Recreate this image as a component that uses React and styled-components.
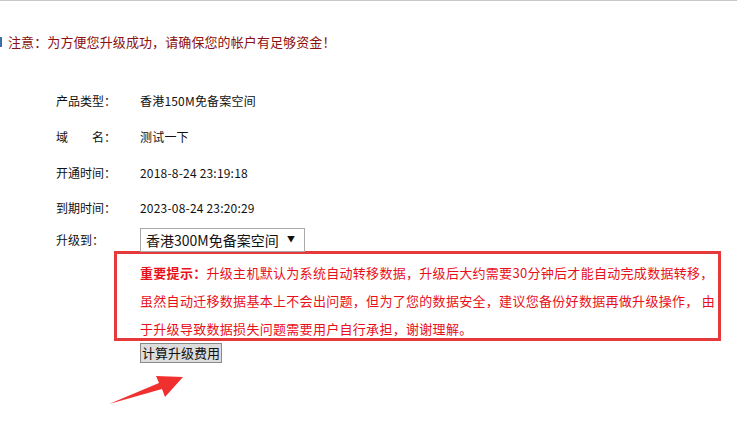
import styled, { createGlobalStyle } from 'styled-components';

const GlobalStyle = createGlobalStyle`
  html, body {
    margin: 0;
    padding: 0;
    background: #ffffff;
  }
  body {
    font-family: "Noto Sans CJK SC", "Liberation Sans", sans-serif;
    color: #111111;
  }
`;

const Page = styled.div`
  position: relative;
  width: 737px;
  height: 437px;
  border-top: 1px solid #c8c8c8;
  box-sizing: border-box;
  overflow: hidden;
`;

const Notice = styled.div`
  margin-top: 32px;
  padding-left: 8px;
  height: 18px;
  line-height: 18px;
  font-size: 13px;
  color: #8b1010;
  letter-spacing: 0.1px;
  position: relative;
  &::before {
    content: '';
    position: absolute;
    left: 0;
    top: 4px;
    width: 2px;
    height: 10px;
    background: #3a6ea5;
  }
`;

const Form = styled.div`
  margin-top: 31px;
  padding-left: 56px;
  display: flex;
  flex-direction: column;
`;

const Row = styled.div`
  display: flex;
  align-items: center;
  height: ${(p) => p.$h || 36}px;
  font-size: 12px;
`;

const Label = styled.div`
  width: 84px;
  flex-shrink: 0;
`;

const Value = styled.div`
  font-size: 12px;
  letter-spacing: 0.2px;
`;

const SelectWrap = styled.span`
  position: relative;
  display: inline-block;
  margin-top: 2px;
  &::after {
    content: '▼';
    position: absolute;
    right: 10px;
    top: 5px;
    font-size: 8px;
    color: #111;
    pointer-events: none;
  }
`;

const Select = styled.select`
  appearance: none;
  -webkit-appearance: none;
  width: 165px;
  height: 24px;
  padding: 0 0 0 5px;
  border: 1px solid #a9a9a9;
  border-radius: 0;
  background: #ffffff;
  font-family: "Noto Sans CJK SC", sans-serif;
  font-size: 14px;
  color: #111;
`;

const Warning = styled.div`
  margin: -2px 0 0 114px;
  width: 578px;
  border: 3px solid #e5393c;
  padding: 5px 0 0 23px;
  height: 79px;
  font-size: 13px;
  line-height: 28px;
  color: #e8101a;
  letter-spacing: 0.3px;
  strong {
    font-weight: bold;
  }
`;

const Button = styled.button`
  margin: 2px 0 0 140px;
  height: 20px;
  padding: 0 1px;
  border: 1px solid #8a8a8a;
  border-radius: 0;
  background: #dddddd;
  font-family: "Noto Sans CJK SC", sans-serif;
  font-size: 13px;
  line-height: 18px;
  color: #111;
  align-self: flex-start;
`;

const Column = styled.div`
  display: flex;
  flex-direction: column;
`;

const Arrow = styled.svg`
  position: absolute;
  left: 100px;
  top: 365px;
`;

export default function App() {
  return (
    <>
      <GlobalStyle />
      <Page>
        <Notice>注意：为方便您升级成功，请确保您的帐户有足够资金！</Notice>
        <Form>
          <Row $h={36}><Label>产品类型：</Label><Value>香港150M免备案空间</Value></Row>
          <Row $h={36}><Label>域　　名：</Label><Value>测试一下</Value></Row>
          <Row $h={36}><Label>开通时间：</Label><Value>2018-8-24 23:19:18</Value></Row>
          <Row $h={35}><Label>到期时间：</Label><Value>2023-08-24 23:20:29</Value></Row>
          <Row $h={28}>
            <Label>升级到：</Label>
            <SelectWrap>
              <Select defaultValue="300">
                <option value="300">香港300M免备案空间</option>
              </Select>
            </SelectWrap>
          </Row>
        </Form>
        <Column>
          <Warning>
            <strong>重要提示：</strong>升级主机默认为系统自动转移数据，升级后大约需要30分钟后才能自动完成数据转移，<br />
            虽然自动迁移数据基本上不会出问题，但为了您的数据安全，建议您备份好数据再做升级操作， 由<br />
            于升级导致数据损失问题需要用户自行承担，谢谢理解。
          </Warning>
          <Button>计算升级费用</Button>
        </Column>
        <Arrow width="90" height="45" viewBox="0 0 90 45">
          <polygon points="9,38 59,17 56,10 83,11 65,31 62,23" fill="#f0302f" />
        </Arrow>
      </Page>
    </>
  );
}
